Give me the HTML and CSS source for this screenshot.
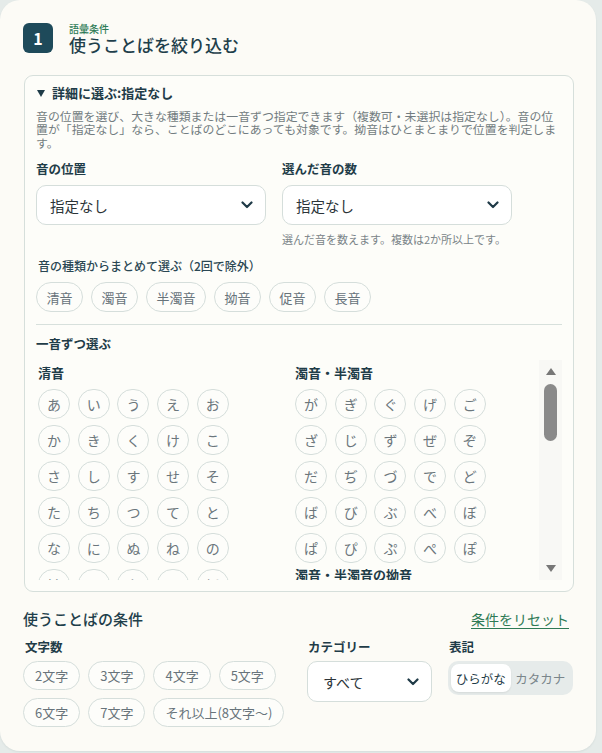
FILE: index.html
```html
<!DOCTYPE html>
<html lang="ja">
<head>
<meta charset="utf-8">
<title>語彙条件</title>
<link rel="stylesheet" href="styles.css">
</head>
<body>
<div class="card">
  <header class="head">
    <div class="badge">1</div>
    <div class="head-text">
      <div class="eyebrow">語彙条件</div>
      <h1 class="title">使うことばを絞り込む</h1>
    </div>
  </header>

  <section class="details">
    <div class="summary"><span class="tri"></span>詳細に選ぶ:指定なし</div>
    <p class="desc">音の位置を選び、大きな種類または一音ずつ指定できます（複数可・未選択は指定なし）。音の位<br>置が「指定なし」なら、ことばのどこにあっても対象です。拗音はひとまとまりで位置を判定しま<br>す。</p>

    <div class="sel-grid">
      <div class="field">
        <div class="label">音の位置</div>
        <div class="select wide"><span>指定なし</span><svg class="chev" width="12" height="8" viewBox="0 0 12 8"><path d="M1.5 1.5 L6 6 L10.5 1.5" fill="none" stroke="#1f3a47" stroke-width="2.2" stroke-linecap="round" stroke-linejoin="round"/></svg></div>
      </div>
      <div class="field">
        <div class="label">選んだ音の数</div>
        <div class="select wide"><span>指定なし</span><svg class="chev" width="12" height="8" viewBox="0 0 12 8"><path d="M1.5 1.5 L6 6 L10.5 1.5" fill="none" stroke="#1f3a47" stroke-width="2.2" stroke-linecap="round" stroke-linejoin="round"/></svg></div>
        <div class="help">選んだ音を数えます。複数は2か所以上です。</div>
      </div>
    </div>

    <div class="label group-label">音の種類からまとめて選ぶ（2回で除外）</div>
    <div class="chips">
      <span class="chip">清音</span><span class="chip">濁音</span><span class="chip">半濁音</span><span class="chip">拗音</span><span class="chip">促音</span><span class="chip">長音</span>
    </div>

    <hr class="divider">

    <div class="label one-label">一音ずつ選ぶ</div>
    <div class="scroll">
      <div class="scroll-content">
        <div class="kcol">
          <div class="klabel">清音</div>
          <div class="kgrid">
            <span class="k">あ</span><span class="k">い</span><span class="k">う</span><span class="k">え</span><span class="k">お</span>
            <span class="k">か</span><span class="k">き</span><span class="k">く</span><span class="k">け</span><span class="k">こ</span>
            <span class="k">さ</span><span class="k">し</span><span class="k">す</span><span class="k">せ</span><span class="k">そ</span>
            <span class="k">た</span><span class="k">ち</span><span class="k">つ</span><span class="k">て</span><span class="k">と</span>
            <span class="k">な</span><span class="k">に</span><span class="k">ぬ</span><span class="k">ね</span><span class="k">の</span>
            <span class="k">は</span><span class="k">ひ</span><span class="k">ふ</span><span class="k">へ</span><span class="k">ほ</span>
            <span class="k">ま</span><span class="k">み</span><span class="k">む</span><span class="k">め</span><span class="k">も</span>
          </div>
        </div>
        <div class="kcol">
          <div class="klabel">濁音・半濁音</div>
          <div class="kgrid">
            <span class="k">が</span><span class="k">ぎ</span><span class="k">ぐ</span><span class="k">げ</span><span class="k">ご</span>
            <span class="k">ざ</span><span class="k">じ</span><span class="k">ず</span><span class="k">ぜ</span><span class="k">ぞ</span>
            <span class="k">だ</span><span class="k">ぢ</span><span class="k">づ</span><span class="k">で</span><span class="k">ど</span>
            <span class="k">ば</span><span class="k">び</span><span class="k">ぶ</span><span class="k">べ</span><span class="k">ぼ</span>
            <span class="k">ぱ</span><span class="k">ぴ</span><span class="k">ぷ</span><span class="k">ぺ</span><span class="k">ぽ</span>
          </div>
          <div class="klabel klabel-next">濁音・半濁音の拗音</div>
          <div class="kgrid">
            <span class="k">ぎゃ</span><span class="k">ぎゅ</span><span class="k">ぎょ</span><span class="k">じゃ</span><span class="k">じゅ</span>
          </div>
        </div>
      </div>
      <div class="sbar">
        <div class="sb-btn"><span class="up"></span></div>
        <div class="thumb"></div>
        <div class="sb-fill"></div>
        <div class="sb-btn sb-down"><span class="down"></span></div>
      </div>
    </div>
  </section>

  <section class="conds">
    <div class="conds-head">
      <h2 class="conds-title">使うことばの条件</h2>
      <a class="reset" href="#">条件をリセット</a>
    </div>
    <div class="conds-grid">
      <div>
        <div class="label">文字数</div>
        <div class="chips chips-len">
          <span class="chip">2文字</span><span class="chip">3文字</span><span class="chip">4文字</span><span class="chip">5文字</span>
          <span class="chip">6文字</span><span class="chip">7文字</span><span class="chip">それ以上(8文字〜)</span>
        </div>
      </div>
      <div>
        <div class="label">カテゴリー</div>
        <div class="select cat"><span>すべて</span><svg class="chev" width="12" height="8" viewBox="0 0 12 8"><path d="M1.5 1.5 L6 6 L10.5 1.5" fill="none" stroke="#1f3a47" stroke-width="2.2" stroke-linecap="round" stroke-linejoin="round"/></svg></div>
      </div>
      <div>
        <div class="label">表記</div>
        <div class="seg">
          <span class="seg-btn active">ひらがな</span><span class="seg-btn">カタカナ</span>
        </div>
      </div>
    </div>
  </section>
</div>
</body>
</html>
```

FILE: styles.css
```css
* { box-sizing: border-box; }
html, body { margin: 0; padding: 0; }
body {
  background: #e5ebe9;
  font-family: "Noto Sans CJK JP", "Noto Sans", "Liberation Sans", sans-serif;
  color: #1f3d4a;
  width: 602px;
  height: 753px;
  overflow: hidden;
}
.card {
  width: 596px;
  height: 751px;
  background: #fcfbf6;
  border-radius: 20px;
  padding: 23px 23px 0 24px;
  box-shadow: 0 1px 2px rgba(40, 70, 70, 0.08);
}
.head {
  display: flex;
  align-items: center;
  gap: 16px;
  height: 30px;
  margin-left: -1px;
}
.badge {
  width: 30px;
  height: 30px;
  border-radius: 6px;
  background: #1e4a5a;
  color: #fff;
  font-weight: 700;
  font-size: 16px;
  display: flex;
  align-items: center;
  justify-content: center;
  line-height: 1;
}
.head-text { display: flex; flex-direction: column; margin-top: 2px; }
.eyebrow {
  font-size: 10px;
  line-height: 12px;
  color: #2e7b57;
  font-weight: 500;
}
.title {
  margin: 0;
  font-size: 17px;
  line-height: 20px;
  font-weight: 500;
  color: #1f3f4b;
}
.details {
  margin-top: 22px;
  width: 550px;
  height: 517px;
  border: 1px solid #d6dfdb;
  border-radius: 9px;
  background: #fdfdf9;
  padding: 10px 11px 0 11px;
}
.summary {
  display: flex;
  align-items: center;
  gap: 7px;
  font-size: 13px;
  line-height: 14px;
  font-weight: 700;
  color: #1f3c48;
  padding-left: 1px;
}
.tri {
  width: 0;
  height: 0;
  border-left: 4px solid transparent;
  border-right: 4px solid transparent;
  border-top: 7px solid #1f3c48;
}
.desc {
  margin: 9px 0 0 0;
  font-size: 11.9px;
  line-height: 13.4px;
  color: #727c80;
  white-space: nowrap;
}
.label {
  font-size: 12.5px;
  line-height: 14px;
  font-weight: 700;
  color: #1f3c48;
}
.sel-grid {
  margin-top: 13px;
  display: grid;
  grid-template-columns: 230px 230px;
  column-gap: 16px;
}
.field .label { margin-bottom: 9px; }
.select {
  height: 40px;
  border: 1px solid #d5dedb;
  border-radius: 10px;
  background: #fff;
  display: flex;
  align-items: center;
  justify-content: space-between;
  padding: 0 12px 0 13px;
  font-size: 14.5px;
  color: #2b3438;
}
.chev { display: block; }
.help {
  margin-top: 8px;
  font-size: 11px;
  line-height: 13px;
  color: #7a8488;
}
.group-label {
  margin-top: 13px;
  padding-left: 2px;
  font-size: 12px;
  font-weight: 500;
  color: #2a4753;
}
.chips {
  margin-top: 9px;
  display: flex;
  flex-wrap: wrap;
  gap: 8px;
}
.chip {
  height: 30px;
  padding: 0 9.5px;
  border: 1px solid #d5dedb;
  border-radius: 15px;
  display: inline-flex;
  align-items: center;
  font-size: 13px;
  color: #67737a;
  background: #fdfdfa;
  white-space: nowrap;
}
.divider {
  margin: 12px 0 0 0;
  border: 0;
  border-top: 1px solid #d7e0dc;
}
.one-label { margin-top: 12px; }
.scroll {
  margin-top: 9px;
  height: 220px;
  display: flex;
}
.scroll-content {
  flex: 1;
  overflow: hidden;
  display: flex;
  gap: 14px;
  padding: 6px 0 0 2px;
}
.kcol { width: 243px; }
.klabel {
  font-size: 13px;
  line-height: 14px;
  font-weight: 700;
  color: #1f3c48;
  margin-bottom: 9px;
}
.klabel-next { margin-top: 5px; }
.kgrid {
  display: grid;
  grid-template-columns: repeat(5, 32px);
  column-gap: 7.7px;
  row-gap: 6px;
}
.k {
  width: 32px;
  height: 30px;
  border: 1px solid #d5dedb;
  border-radius: 15px;
  display: flex;
  align-items: center;
  justify-content: center;
  font-size: 14px;
  color: #6b767c;
  background: #fdfdfa;
  white-space: nowrap;
}
.sbar {
  width: 23px;
  background: #f8f8f5;
  display: flex;
  flex-direction: column;
  align-items: center;
}
.sb-btn {
  height: 22px;
  width: 100%;
  display: flex;
  align-items: center;
  justify-content: center;
}
.sb-down { height: 24px; }
.up, .down {
  width: 0;
  height: 0;
  border-left: 5px solid transparent;
  border-right: 5px solid transparent;
}
.up { border-bottom: 7px solid #777; }
.down { border-top: 7px solid #777; }
.thumb {
  margin-top: 2px;
  width: 13px;
  height: 57px;
  border-radius: 7px;
  background: #8a8a8a;
}
.sb-fill { flex: 1; }
.conds-head {
  margin-top: 17px;
  display: flex;
  justify-content: space-between;
  align-items: center;
  width: 545px;
}
.conds-title {
  margin: 0;
  font-size: 15px;
  line-height: 20px;
  font-weight: 500;
  color: #1f3f4b;
  margin-left: -1px;
}
.reset {
  font-size: 14px;
  line-height: 20px;
  color: #2e7a55;
  text-decoration: underline;
  text-underline-offset: 3px;
}
.conds-grid {
  margin-top: 11px;
  display: grid;
  grid-template-columns: 267px 125px 125px;
  column-gap: 16px;
}
.conds-grid .label { margin-bottom: 7px; padding-left: 1px; }
.chips-len {
  margin-top: 0;
  width: 270px;
  column-gap: 8px;
  row-gap: 7.5px;
  margin-left: -1px;
}
.chips-len .chip {
  height: 29px;
  padding: 0 11px;
  color: #68747b;
}
.select.cat {
  height: 41px;
  padding: 0 12px 0 15px;
  font-size: 14px;
}
.seg {
  width: 125px;
  height: 34px;
  border-radius: 10px;
  background: #e6ebea;
  padding: 3px;
  display: flex;
}
.seg-btn {
  flex: 1;
  display: flex;
  align-items: center;
  justify-content: center;
  font-size: 12.5px;
  color: #7a868b;
  border-radius: 8px;
  white-space: nowrap;
}
.seg-btn.active {
  background: #fff;
  color: #1f3c48;
  box-shadow: 0 1px 2px rgba(0, 0, 0, 0.08);
}
```
